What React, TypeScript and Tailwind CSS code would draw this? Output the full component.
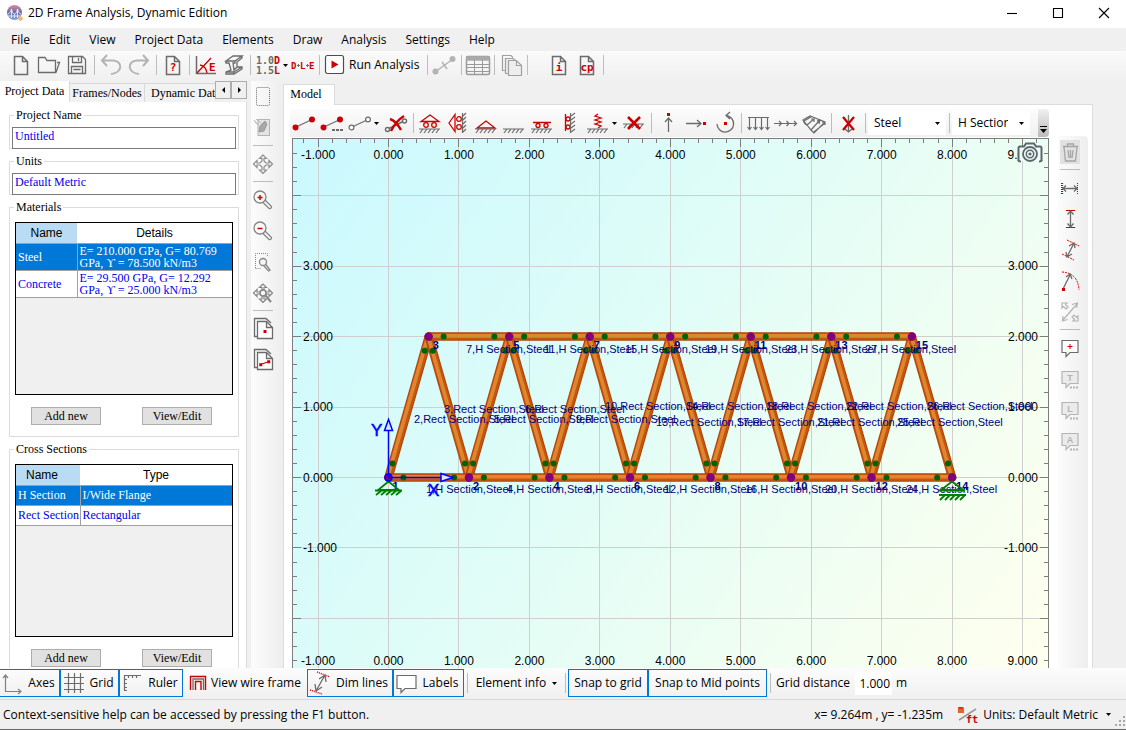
import { ReactNode } from "react";
import clsx from "clsx";

const RED = "#cc0000";
const GRAY = "#6b6b6b";
const LIGHT = "#b4b4b4";

type IconProps = { w?: number; h?: number; color?: string; children: ReactNode };

const Icon = ({ w = 24, h = 24, color = GRAY, children }: IconProps) => (
  <svg width={w} height={h} viewBox={`0 0 ${w} ${h}`} fill="none" stroke={color} strokeWidth="1.5" className="shrink-0" aria-hidden="true">
    {children}
  </svg>
);

const Caret = () => (
  <svg width="5" height="3" viewBox="0 0 5 3" className="shrink-0" aria-hidden="true">
    <path d="M0 0H5L2.5 3Z" fill="#000" />
  </svg>
);

/* ---------- main toolbar icons ---------- */

const PageShape = () => <path d="M5.5 3.5H13.500L18.500 8.500V21.500H5.500ZM13.500 3.500V8.500H18.500" />;

const NewIcon = () => <Icon><PageShape /></Icon>;

const OpenIcon = () => (
  <Icon>
    <path strokeWidth="1.300" d="M1.500 4.500H8L10 7.500H18.500V19.500H1.500ZM19 19.500L22.500 9.500H20" />
  </Icon>
);

const SaveIcon = () => (
  <Icon>
    <path strokeWidth="1.300" d="M3.500 3.500H17.500L20.500 6.500V20.500H3.500ZM7.500 3.500V9.500H16.500V3.500M13.500 5V8M6.500 20V13.500H17.500V20M8.500 16.500H15.500" />
  </Icon>
);

const UndoIcon = () => (
  <Icon color={LIGHT}>
    <path strokeWidth="2" d="M3 7.500H14C24.500 8 23.500 20 12 21M8 2L3 7.500L8 13" />
  </Icon>
);

const RedoIcon = () => (
  <Icon color={LIGHT}>
    <path strokeWidth="2" d="M21 7.500H10C-0.500 8 0.500 20 12 21M16 2L21 7.500L16 13" />
  </Icon>
);

const PageTextIcon = ({ label }: { label: string }) => (
  <Icon>
    <PageShape />
    <text x="12" y="18" textAnchor="middle" stroke="none" fill={RED} className="font-['DejaVu_Sans_Mono',monospace] text-[11px] font-bold">{label}</text>
  </Icon>
);

const AngleIcon = () => (
  <Icon>
    <path d="M2.500 3V20.500H22" />
    <path d="M3 20L17 5M6 12Q12 13 13 20" stroke={RED} strokeWidth="1.300" />
    <text x="15" y="18" stroke="none" fill={RED} className="font-['DejaVu_Sans_Mono',monospace] text-[11px] font-bold">E</text>
  </Icon>
);

const BeamIcon = () => (
  <Icon>
    <path strokeWidth="1.300" d="M4 8L11 3H20L13 8ZM4 8V10H7L9 17L4 19V21H12L20 16V14H15L12 17L11 10H13V8M20 3V5L15 9V14M4 19H12V21M12 19L20 14" />
  </Icon>
);

const ComboIcon = () => (
  <Icon w={26} h={22}>
    <g stroke="none" className="font-['DejaVu_Sans_Mono',monospace] text-[10px] font-bold">
      <text x="1" y="10" fill={GRAY}>1.0<tspan fill={RED}>D</tspan></text>
      <text x="1" y="20" fill={GRAY}>1.5<tspan fill={RED}>L</tspan></text>
    </g>
  </Icon>
);

const DleIcon = () => (
  <Icon w={26}>
    <g stroke="none" fill={RED} className="font-['DejaVu_Sans_Mono',monospace] text-[9px] font-bold">
      <text x="1" y="16">D</text>
      <text x="10" y="16">L</text>
      <text x="19" y="16">E</text>
    </g>
    <path d="M7 12.500H10M8.500 11V14M16 12.500H19M17.500 11V14" strokeWidth="1" />
  </Icon>
);

const RunIcon = () => (
  <Icon w={22} h={22} color="#4d4d4d">
    <rect x="1.500" y="1.500" width="18" height="18" rx="2" fill="#fff" strokeWidth="1.200" />
    <path d="M7.500 6.500V14.500L14.500 10.500Z" fill={RED} stroke="none" />
  </Icon>
);

const MemberGrayIcon = () => (
  <Icon color={LIGHT}>
    <path d="M3 19L21 6M10 9L15 16" />
    <circle cx="3.500" cy="18.500" r="2.300" fill={LIGHT} />
    <circle cx="20.500" cy="6" r="2.300" fill={LIGHT} />
  </Icon>
);

const TableIcon = () => (
  <Icon w={26} color="#9a9a9a">
    <rect x="1.500" y="3.500" width="23" height="18" rx="1.500" />
    <path d="M2 4H24V7H2Z" fill="#aaa" stroke="#aaa" />
    <path d="M1 11.500H25M1 14.500H25M1 18.500H25M9.500 7V21M17.500 7V21" strokeWidth="1" />
  </Icon>
);

const CopiesIcon = () => (
  <Icon color="#a0a0a0">
    <g strokeWidth="1.200">
      <path d="M6 17.500H3.500V2.500H12L14 4.500" />
      <path d="M9 20.500H6.500V5.500H14L17 8" fill="#eee" />
      <path d="M9.500 7.500H17.500L22.500 12.500V22.500H9.500ZM17.500 7.500V12.500H22.500" fill="#eee" />
    </g>
  </Icon>
);

/* ---------- left strip icons ---------- */

const SelectIcon = () => (
  <Icon><rect x="5.500" y="2.500" width="13" height="18" rx="1" strokeWidth="1" strokeDasharray="1 1" /></Icon>
);

const BrushIcon = () => (
  <Icon color={LIGHT}>
    <rect x="7" y="3.500" width="11.500" height="16" fill="#e4e4e4" strokeWidth="1" />
    <path d="M9 10L14 5L16 8L13 15L8 16Z" fill="#a8a8a8" stroke="#9a9a9a" strokeWidth="1" />
    <path d="M4 6L8 9M5 3L10 7M3 4L6 8" strokeWidth="1" />
  </Icon>
);

const ArrowsPath = () => (
  <path strokeWidth="1.200" d="M12 3L8.500 6.500H11V9L9 11H6V8.500L2.500 12L6 15.500V13H9L11 15V18H8.500L12 21.500L15.500 18H13V15L15 13H18V15.500L21.500 12L18 8.500V11H15L13 9V6.500H15.500Z" />
);

const PanIcon = () => <Icon color="#8d8d8d"><ArrowsPath /></Icon>;

const ZoomIcon = ({ minus }: { minus?: boolean }) => (
  <Icon color="#858585">
    <circle cx="9" cy="9" r="6" strokeWidth="1.300" />
    <path d="M14 12L20.500 18.500Q20.500 21 18 20.500L12 14.500" strokeWidth="1.300" />
    <path d={minus ? "M6.500 9.500H11.500" : "M6.500 9.500H11.500M9 7V12"} stroke={RED} />
  </Icon>
);

const ZoomAreaIcon = () => (
  <Icon color="#858585">
    <path d="M4.500 18V3.500H16.500V6M4.500 18.500H10" strokeWidth="1" strokeDasharray="1 1" />
    <circle cx="12" cy="12" r="3.500" strokeWidth="1.300" />
    <path d="M14.500 14L19 20L17.500 21L13 16" strokeWidth="1.300" />
  </Icon>
);

const ZoomExtentsIcon = () => (
  <Icon color="#858585">
    <ArrowsPath />
    <circle cx="12" cy="12" r="3" fill="#f6f6f6" />
    <path d="M14.500 14.500L20 21" strokeWidth="2" />
  </Icon>
);

const SheetsIcon = ({ member }: { member?: boolean }) => (
  <Icon>
    <path d="M6 19.500H3.500V1.500H15L20 6" strokeWidth="1.300" />
    <path d="M6.500 4.500H15.500L21.500 10.500V21.500H6.500ZM15.500 4.500V10.500H21.500" fill="#fff" strokeWidth="1.300" />
    {member ? (
      <g stroke={RED}>
        <path d="M9.500 16.500L18 13.500" strokeWidth="1.200" />
        <rect x="9" y="16" width="1.500" height="1.500" fill={RED} />
        <rect x="17" y="13" width="1.500" height="1.500" fill={RED} />
      </g>
    ) : (
      <rect x="12.500" y="13" width="3" height="3" fill={RED} stroke="none" />
    )}
  </Icon>
);

/* ---------- model toolbar icons ---------- */

const Ground = ({ y = 18 }: { y?: number }) => (
  <path strokeWidth="1.200" d={`M1 ${y}H22M2 ${y + 4}L5 ${y}M6 ${y + 4}L9 ${y}M10 ${y + 4}L13 ${y}M14 ${y + 4}L17 ${y}M18 ${y + 4}L21 ${y}`} />
);

const MemberIcon = ({ dots, hollow }: { dots?: boolean; hollow?: boolean }) => (
  <Icon>
    <path d="M4 16L19 9" strokeWidth="1.200" />
    <circle cx="3.500" cy="16.500" r="2.400" fill={hollow ? "#fff" : RED} stroke={hollow ? GRAY : RED} strokeWidth="1.200" />
    <circle cx="20" cy="8.500" r="2.400" fill={hollow ? "#fff" : RED} stroke={hollow ? GRAY : RED} strokeWidth="1.200" />
    {dots && <path d="M12 19H24" strokeWidth="2" strokeDasharray="3 1" />}
  </Icon>
);

const DeleteMemberIcon = () => (
  <Icon>
    <path d="M4 18L20 10" />
    <circle cx="3.500" cy="18.500" r="2" fill="#fff" />
    <circle cx="20.500" cy="10" r="2" fill="#fff" />
    <path d="M6 8Q12 10 17 19M20 5Q12 10 7 20" stroke={RED} strokeWidth="2.400" />
  </Icon>
);

const RollerPinIcon = () => (
  <Icon>
    <g stroke={RED} strokeWidth="1.300">
      <path d="M12 4L3 10.500H21Z" />
      <circle cx="8" cy="14" r="2.300" />
      <circle cx="16" cy="14" r="2.300" />
    </g>
    <Ground />
  </Icon>
);

const WallRollerPinIcon = () => (
  <Icon>
    <g stroke={RED} strokeWidth="1.300">
      <path d="M3 12L9 3.500V20.500Z" />
      <circle cx="13" cy="8" r="2.300" />
      <circle cx="13" cy="16" r="2.300" />
    </g>
    <path strokeWidth="1.200" d="M16.500 2V22M17 5L20 2M17 9L20 6M17 13L20 10M17 17L20 14M17 21L20 18" />
  </Icon>
);

const PinIcon = () => (
  <Icon><path d="M12 10L3 17H21Z" stroke={RED} strokeWidth="1.300" /><Ground /></Icon>
);

const FixedIcon = () => <Icon><Ground /></Icon>;

const SliderIcon = () => (
  <Icon>
    <g stroke={RED} strokeWidth="1.300">
      <path d="M3 11.500H21" />
      <circle cx="8" cy="14.500" r="2" />
      <circle cx="16" cy="14.500" r="2" />
    </g>
    <Ground />
  </Icon>
);

const WallSliderIcon = () => (
  <Icon>
    <g stroke={RED} strokeWidth="1.300">
      <path d="M7.500 3V20" />
      <circle cx="10" cy="8" r="2" />
      <circle cx="10" cy="16" r="2" />
    </g>
    <path strokeWidth="1.200" d="M12.500 2V22M13 5L17 2M13 9L17 6M13 13L17 10M13 17L17 14M13 21L17 18" />
  </Icon>
);

const SpringIcon = () => (
  <Icon>
    <path d="M12 3L9 5L15 7L9 9L15 11L9 13L15 15L12 17" stroke={RED} strokeWidth="1.300" />
    <Ground />
  </Icon>
);

const DeleteSupportIcon = () => (
  <Icon>
    <Ground y={13} />
    <path d="M6 6L18 18M18 6L6 18" stroke={RED} strokeWidth="2.600" />
  </Icon>
);

const ForceUpIcon = () => (
  <Icon>
    <path d="M12.500 21V7M9 11L12.500 7L16 11" strokeWidth="1.300" />
    <rect x="11" y="2" width="3" height="3" fill={RED} stroke="none" />
  </Icon>
);

const ForceRightIcon = () => (
  <Icon>
    <path d="M2 12.500H17M13 9L17 12.500L13 16" strokeWidth="1.300" />
    <rect x="19" y="11" width="3" height="3" fill={RED} stroke="none" />
  </Icon>
);

const MomentIcon = () => (
  <Icon>
    <path d="M5 13A8.300 8.300 0 1 0 14 4.500M18 1L14 4.500L18 8" strokeWidth="1.300" />
    <rect x="12" y="11" width="3" height="3" fill={RED} stroke="none" />
  </Icon>
);

const DistVertIcon = () => (
  <Icon>
    <path strokeWidth="1.200" d="M2 6.500H23M3.500 7V18M9.500 7V18M15.500 7V18M21.500 7V18M1.500 16L3.500 18.500L5.500 16M7.500 16L9.500 18.500L11.500 16M13.500 16L15.500 18.500L17.500 16M19.500 16L21.500 18.500L23.500 16" />
  </Icon>
);

const DistHorizIcon = () => (
  <Icon>
    <path strokeWidth="1.200" d="M0 12.500H23M5 10L7.500 12.500L5 15M12.500 10L15 12.500L12.500 15M20 10L22.500 12.500L20 15" />
  </Icon>
);

const SnowLoadIcon = () => (
  <Icon>
    <path strokeWidth="1.200" d="M1 9L8 5L23 11L12 22L9 19ZM1 9Q3 14 5 14L9 19M5 14L12 8M9 19L17 10M2 10L9 6M12 21L23 12M9 8H12V11M15 10L18 9L17 13M20 11H23V14" />
  </Icon>
);

const DeleteLoadIcon = () => (
  <Icon>
    <path d="M12.500 4V21M9 18L12.500 21L16 18" strokeWidth="1.300" />
    <path d="M7 6L18 19M18 6L7 19" stroke={RED} strokeWidth="2.300" />
  </Icon>
);

/* ---------- right strip icons ---------- */

const TrashIcon = () => (
  <Icon color="#a5a5a5">
    <path d="M5 6.500H20M9.500 6V4H15.500V6M6 7L7.500 21H17.500L19 7M10 10L11 18M12.500 10V18M15 10L14 18" strokeWidth="1.300" />
  </Icon>
);

const DimHorizIcon = () => (
  <Icon>
    <path d="M3.500 7V18M4.500 7V18M19.500 7V18" stroke={RED} strokeWidth="1" strokeDasharray="1 1" />
    <path d="M5 12.500H19M8 9.500L5 12.500L8 15.500M16 9.500L19 12.500L16 15.500" strokeWidth="1.300" />
  </Icon>
);

const DimVertIcon = () => (
  <Icon>
    <path d="M8 3.500H17M8 20.500H17" stroke={RED} strokeWidth="1" />
    <path d="M12.500 4V20M9.500 7.500L12.500 4L15.500 7.500M9.500 16.500L12.500 20L15.500 16.500" strokeWidth="1.300" />
  </Icon>
);

const DimAlignedIcon = () => (
  <Icon>
    <path d="M9 2L21 8M4 16L16 22" stroke={RED} strokeWidth="1" strokeDasharray="2 1" />
    <path d="M16 5L9 19M11 8L16 5L17 10M8 14L9 19L14 16" strokeWidth="1.300" />
  </Icon>
);

const DimRadiusIcon = () => (
  <Icon>
    <path d="M4 3Q20 4 21 21" stroke={RED} strokeWidth="1" strokeDasharray="2 1" />
    <path d="M5 20L12 6M8 8L12 5L14 10" strokeWidth="1.300" />
    <rect x="4" y="19" width="3" height="3" fill={RED} stroke="none" />
  </Icon>
);

const DimSizeIcon = () => (
  <Icon color={LIGHT}>
    <path strokeWidth="1.200" d="M5 20L19 4M14 4.500L19.500 3L18.500 8M5 16L4.500 21L9.500 19.500M4 3H9L7.500 4.500L10 7L8 9L5.500 6.500L4 8ZM20 21H15L16.500 19.500L14 17L16 15L18.500 17.500L20 16Z" />
  </Icon>
);

const BubbleIcon = ({ letter, plus }: { letter?: string; plus?: boolean }) => (
  <Icon color={plus ? GRAY : LIGHT}>
    <path d="M4 4.500H20V16.500H12L8 20.500V16.500H4Z" fill={plus ? "#fff" : "#ebebeb"} strokeWidth="1.200" />
    {plus && <path d="M12 8V13M9.500 10.500H14.500" stroke={RED} strokeWidth="1" />}
    {letter && (
      <>
        <text x="12" y="14" textAnchor="middle" stroke="none" fill={LIGHT} className="font-['Liberation_Sans',sans-serif] text-[9px] font-bold">{letter}</text>
        <path d="M12 20.500H21" strokeWidth="2" strokeDasharray="2 1" />
      </>
    )}
  </Icon>
);

/* ---------- bottom toolbar icons ---------- */

const AxesIcon = () => (
  <Icon color="#808080">
    <path strokeWidth="1.200" d="M5.500 4V20.500H21M3 7L5.500 4L8 7M18 18L21 20.500L18 23" />
  </Icon>
);
const GridIcon = () => (
  <Icon>
    <path strokeWidth="1.200" d="M2 6.500H22M2 12.500H22M2 18.500H22M6.500 2V22M12.500 2V22M18.500 2V22" />
  </Icon>
);
const RulerIcon = () => (
  <Icon>
    <path strokeWidth="1.200" d="M4.500 20V4.500H21M5 8.500H7M5 12.500H7M5 16.500H7M8.500 5V7M12.500 5V7M16.500 5V7M5 19.500H7" />
  </Icon>
);
const WireFrameIcon = () => (
  <Icon w={18} h={18}>
    <path d="M1.500 16V2.500H16.500V16M6.500 16V7.500H12V16" stroke={RED} strokeWidth="1.400" />
    <path d="M4 16V5H14.500V16" strokeWidth="1.300" />
  </Icon>
);
const DimLinesIcon = () => (
  <Icon>
    <path d="M9 1L22 6M2 19L14 23" stroke={RED} strokeDasharray="1 1" />
    <path strokeWidth="1.300" d="M17 4L8 20M11 8L17 4L18 11M7 13L8 20L14 16" />
  </Icon>
);
const LabelsIcon = () => (
  <Icon><path d="M2 4.500H21V17.500H10L6 21.500V17.500H2Z" fill="#fff" strokeWidth="1.200" /></Icon>
);

/* ---------- shared controls ---------- */

const Sep = ({ wide }: { wide?: boolean }) => (
  <span className={clsx("flex h-7 shrink-0 items-center justify-center", wide ? "w-1.5" : "w-[5px]")}>
    <span className="h-5 w-px bg-[#bdbdbd]" />
  </span>
);

const HSep = () => (
  <span className="flex h-[5px] w-6 shrink-0 items-center justify-center">
    <span className="h-px w-5 bg-[#bdbdbd]" />
  </span>
);

type ToolProps = { title: string; children: ReactNode; split?: boolean; active?: boolean };

const Tool = ({ title, children, split }: ToolProps) => (
  <button
    type="button"
    aria-label={title}
    className={clsx("flex h-7 shrink-0 items-center", split ? "w-9 gap-0.5 pl-0.5" : "w-7 justify-center")}
  >
    {children}
    {split && <Caret />}
  </button>
);

const VTool = ({ title, children, active }: ToolProps) => (
  <button type="button" aria-label={title} className="flex h-[31px] w-6 shrink-0 items-center justify-center">
    <span className={clsx("flex w-5 justify-center", active && "bg-[#e1e1e1]")}>{children}</span>
  </button>
);

const Toggle = ({ on, children, className }: { on?: boolean; children: ReactNode; className: string }) => (
  <button
    type="button"
    aria-pressed={on}
    className={clsx("flex h-7 shrink-0 items-center justify-center gap-1 border whitespace-nowrap", on ? "border-[#0078d7]" : "border-transparent", className)}
  >
    {children}
  </button>
);

/* ---------- side panel ---------- */

const Group = ({ title, children }: { title: string; children: ReactNode }) => (
  <fieldset className="border border-[#dcdcdc]">
    <legend className="ml-1 px-0.5 leading-[14px]">{title}</legend>
    {children}
  </fieldset>
);

const PanelInput = ({ label, value }: { label: string; value: string }) => (
  <input
    aria-label={label}
    defaultValue={value}
    className="mx-0.5 mt-[5px] -mb-px block h-[22px] w-[calc(100%-4px)] border border-[#7a7a7a] px-0.5 pb-1 text-[#0000f0]"
  />
);

type DataTableProps = { columns: [string, string]; rows: [string, string][]; narrow?: boolean };

const DataTable = ({ columns, rows, narrow }: DataTableProps) => (
  <div className="mx-[5px] mt-2 h-[173px] border border-black bg-[#f0f0f0]">
    <table className="w-full table-fixed border-collapse bg-white">
      <thead>
        <tr className="h-5 font-['Liberation_Sans',sans-serif]">
          <th className={clsx("bg-[#b9dcf4] font-normal", narrow ? "w-[64px] pr-3" : "w-[61px]")}>{columns[0]}</th>
          <th className="font-normal">{columns[1]}</th>
        </tr>
      </thead>
      <tbody>
        {rows.map((row, i) => (
          <tr key={row[0]} className={clsx(narrow ? "h-5" : "h-[27px]", i === 0 ? "bg-[#0078d7] text-white" : "text-[#0000f0]")}>
            <td className="overflow-hidden border border-l-0 border-[#a0a0a0] px-0.5 whitespace-nowrap">{row[0]}</td>
            <td className="border border-r-0 border-[#a0a0a0] px-0.5">{row[1]}</td>
          </tr>
        ))}
      </tbody>
    </table>
  </div>
);

const GroupButtons = () => (
  <div className="mt-3 mb-[11px] flex justify-between pr-[26px] pl-[21px]">
    {["Add new", "View/Edit"].map((label) => (
      <button key={label} type="button" className="h-[18px] w-[70px] border border-[#adadad] bg-[#e1e1e1] leading-4">
        {label}
      </button>
    ))}
  </div>
);

const SidePanel = () => (
  <aside className="flex w-[247px] shrink-0 flex-col overflow-hidden font-['Liberation_Serif',serif] text-[12px] leading-3">
    <div role="tablist" className="flex h-[21px] shrink-0 items-end">
      <button type="button" role="tab" aria-selected="true" className="h-[21px] w-[70px] shrink-0 border-r border-[#d9d9d9] bg-white pb-0.5">Project Data</button>
      <button type="button" role="tab" aria-selected="false" className="h-[19px] w-[75px] shrink-0 border-t border-r border-[#d9d9d9] bg-[#f2f2f2]">Frames/Nodes</button>
      <button type="button" role="tab" aria-selected="false" className="h-[19px] min-w-0 flex-1 overflow-hidden border-t border-[#d9d9d9] bg-[#f2f2f2] pl-1.5 text-left whitespace-nowrap">Dynamic Data</button>
      {["M5 0V6L2 3Z", "M2 0V6L5 3Z"].map((d, i) => (
        <button key={d} type="button" aria-label={i ? "Next tab" : "Previous tab"} className="flex h-[18px] w-4 shrink-0 items-center justify-center self-start border border-[#adadad] bg-[#f0f0f0]">
          <svg width="7" height="6" viewBox="0 0 7 6"><path d={d} /></svg>
        </button>
      ))}
    </div>
    <div className="flex min-h-0 flex-1 flex-col gap-[5px] overflow-hidden border-r border-[#dcdcdc] bg-white pt-1.5 pr-[7px] pl-[9px]">
      <Group title="Project Name">
        <PanelInput label="Project Name" value="Untitled" />
      </Group>
      <Group title="Units">
        <PanelInput label="Units" value="Default Metric" />
      </Group>
      <Group title="Materials">
        <DataTable
          columns={["Name", "Details"]}
          rows={[
            ["Steel", "E= 210.000 GPa, G= 80.769 GPa, ϒ = 78.500 kN/m3"],
            ["Concrete", "E= 29.500 GPa, G= 12.292 GPa, ϒ = 25.000 kN/m3"],
          ]}
        />
        <GroupButtons />
      </Group>
      <Group title="Cross Sections">
        <DataTable
          narrow
          columns={["Name", "Type"]}
          rows={[
            ["H Section", "I/Wide Flange"],
            ["Rect Section", "Rectangular"],
          ]}
        />
        <GroupButtons />
      </Group>
    </div>
  </aside>
);

/* ---------- model canvas ---------- */

const UNIT = 70.45;
const X0 = 96.5;
const Y0 = 339.5;
const W = 757;
const H = 530;

const px = (x: number) => X0 + x * UNIT;
const py = (y: number) => Y0 - y * UNIT;

const bottomNodes = Array.from({ length: 8 }, (_, i) => ({ x: px((i * 8) / 7), y: py(0), id: i === 0 ? 1 : i * 2 }));
const topNodes = Array.from({ length: 7 }, (_, i) => ({ x: px(((i + 0.5) * 8) / 7), y: py(2), id: i * 2 + 3 }));

type Point = { x: number; y: number };
const chords: [Point, Point][] = [
  ...bottomNodes.slice(1).map((n, i): [Point, Point] => [bottomNodes[i], n]),
  ...topNodes.slice(1).map((n, i): [Point, Point] => [topNodes[i], n]),
];
const diagonals: [Point, Point][] = topNodes.flatMap((n, i): [Point, Point][] => [
  [bottomNodes[i], n],
  [bottomNodes[i + 1], n],
]);

const memberLabels: [number, string, number, number][] = [
  [1, "H", 134, 355], [4, "H", 215, 355], [8, "H", 294, 355], [12, "H", 372, 355], [16, "H", 453, 355], [20, "H", 533, 355], [24, "H", 614, 355],
  [7, "H", 174, 215], [11, "H", 252, 215], [15, "H", 333, 215], [19, "H", 413, 215], [23, "H", 493, 215], [27, "H", 573, 215],
  [2, "Rect", 122, 285], [5, "Rect", 202, 285], [9, "Rect", 284, 285],
  [3, "Rect", 152, 275], [6, "Rect", 233, 275],
  [10, "Rect", 313, 272], [14, "Rect", 394, 272], [18, "Rect", 474, 272], [22, "Rect", 554, 272], [26, "Rect", 635, 272],
  [13, "Rect", 364, 288], [17, "Rect", 445, 288], [21, "Rect", 525, 288], [25, "Rect", 605, 288],
];

const Member = ({ from, to }: { from: Point; to: Point }) => {
  const line = { x1: from.x, y1: from.y, x2: to.x, y2: to.y };
  return (
    <g strokeLinecap="round">
      <line {...line} stroke="#a8470c" strokeWidth="8.500" />
      <line {...line} stroke="#c8540e" strokeWidth="6.500" />
      <line {...line} stroke="#e8822c" strokeWidth="3.600" transform="translate(-0.700 -0.700)" />
      <line {...line} stroke="#a8a040" strokeWidth="0.700" strokeDasharray="3 2" />
    </g>
  );
};

const ReleaseDots = ({ from, to, t }: { from: Point; to: Point; t: number }) => (
  <>
    {[t, 1 - t].map((k) => (
      <circle key={k} cx={from.x + (to.x - from.x) * k} cy={from.y + (to.y - from.y) * k} r="3" fill="#006400" />
    ))}
  </>
);

const ticks = (origin: number, max: number) => {
  const step = UNIT / 5;
  const list: { pos: number; major: boolean }[] = [];
  for (let i = -40; i < 60; i++) {
    const pos = origin + i * step;
    if (pos > 2 && pos < max - 1) list.push({ pos, major: i % 5 === 0 });
  }
  return list;
};

const ModelCanvas = () => (
  <svg
    viewBox={`0 0 ${W} ${H}`}
    preserveAspectRatio="xMinYMin slice"
    className="h-full w-full font-['Liberation_Sans',sans-serif] text-[12px]"
    role="img"
    aria-label="Truss model"
  >
    <defs>
      <linearGradient id="sky" x1="0" y1="0" x2={W} y2={H} gradientUnits="userSpaceOnUse">
        <stop offset="0" stopColor="#caf9ff" />
        <stop offset="0.500" stopColor="#e3fdf6" />
        <stop offset="1" stopColor="#ffffee" />
      </linearGradient>
    </defs>
    <rect width={W} height={H} fill="url(#sky)" />

    <g stroke="#cfcfcf" shapeRendering="crispEdges">
      {[-1, 0, 1, 2, 3, 4, 5, 6, 7, 8, 9].map((x) => <line key={x} x1={px(x)} x2={px(x)} y1="0" y2={H} />)}
      {[-2, -1, 0, 1, 2, 3, 4].map((y) => <line key={y} x1="0" x2={W} y1={py(y)} y2={py(y)} />)}
    </g>

    <g stroke="#7d7d7d" shapeRendering="crispEdges">
      <path d={`M0.500 ${H}V0.500H${W - 0.5}V${H}`} fill="none" />
      {ticks(X0, W).map(({ pos, major }) => <line key={pos} x1={pos} x2={pos} y1="0" y2={major ? 9 : 5} />)}
      {ticks(Y0, H).map(({ pos, major }) => (
        <g key={pos}>
          <line x1="0" x2={major ? 9 : 5} y1={pos} y2={pos} />
          <line x1={W} x2={W - (major ? 9 : 5)} y1={pos} y2={pos} />
        </g>
      ))}
    </g>

    <g textAnchor="middle" fill="#000">
      {[-1, 0, 1, 2, 3, 4, 5, 6, 7, 8, 9].map((x) => (
        <g key={x}>
          <text x={px(x)} y="21">{x.toFixed(3)}</text>
          <text x={px(x)} y="527">{x.toFixed(3)}</text>
        </g>
      ))}
    </g>
    <g fill="#000" textAnchor="end">
      {[-1, 0, 1, 2, 3].map((y) => (
        <g key={y}>
          <text x={y < 0 ? 45 : 41} y={py(y) + 4}>{y.toFixed(3)}</text>
          <text x="746" y={py(y) + 4}>{y.toFixed(3)}</text>
        </g>
      ))}
    </g>

    {diagonals.map(([a, b], i) => <Member key={i} from={a} to={b} />)}
    {chords.map(([a, b], i) => <Member key={i} from={a} to={b} />)}
    {chords.map(([a, b], i) => <ReleaseDots key={i} from={a} to={b} t={0.185} />)}
    {diagonals.map(([a, b], i) => <ReleaseDots key={i} from={a} to={b} t={0.1} />)}
    {[...bottomNodes, ...topNodes].map((n) => <circle key={n.id} cx={n.x} cy={n.y} r="4.200" fill="#800080" />)}

    <g fill="#000080" className="text-[11px]">
      {memberLabels.map(([id, section, x, y]) => (
        <text key={id} x={x} y={y}>{`${id},${section} Section,Steel`}</text>
      ))}
    </g>
    <g fill="#000080" className="text-[11px] font-bold">
      {[...bottomNodes, ...topNodes].map((n) => (
        <text key={n.id} x={n.x + 4} y={n.y + 12}>{n.id}</text>
      ))}
    </g>

    {/* supports */}
    <g stroke="#008000" strokeWidth="1.800" fill="none">
      <path d="M96.500 343.500L86 352H107ZM83 352.500H110M84 357L89 353M89 357L94 353M94 357L99 353M99 357L104 353M104 357L109 353" />
      <path d="M660 343.500L649 352H671ZM647 352.500H673M647 357H674M648 362L653 357M653 362L658 357M658 362L663 357M663 362L668 357M668 362L673 357" />
    </g>

    {/* axes */}
    <g stroke="#0000ff" strokeWidth="1.500" fill="none">
      <circle cx={X0} cy={Y0} r="3.500" fill="#800080" />
      <path d="M96.500 339.500H161M96.500 339.500V283" />
      <path d="M149 335.500L161 339.500L149 343.500ZM92.500 292.500L96.500 281.500L100.500 292.500Z" fill="#d8e8ff" />
    </g>
    <g fill="#0000ff" stroke="#0000ff" strokeWidth="0.500" className="text-[17px]">
      <text x="79" y="298">Y</text>
      <text x="136" y="358">X</text>
    </g>
  </svg>
);

const Combo = ({ label, value }: { label: string; value: string }) => (
  <label className="relative flex h-6 w-[78px] shrink-0 items-center bg-white">
    <select aria-label={label} defaultValue={value} className="h-full w-full appearance-none overflow-hidden pr-[22px] pl-1.5 text-clip">
      <option>{value}</option>
    </select>
    <span className="pointer-events-none absolute right-1.5"><Caret /></span>
  </label>
);

const ModelToolbar = () => (
  <div className="mr-[43px] mb-px ml-1.5 flex h-7 shrink-0 items-center overflow-hidden rounded-r bg-gradient-to-b from-[#fcfcfc] to-[#f0f0f0]">
    <Tool title="Draw member"><MemberIcon /></Tool>
    <Tool title="Draw members"><MemberIcon dots /></Tool>
    <Tool title="End releases" split><MemberIcon hollow /></Tool>
    <Tool title="Delete member"><DeleteMemberIcon /></Tool>
    <Sep wide />
    <Tool title="Pinned roller"><RollerPinIcon /></Tool>
    <Tool title="Vertical pinned roller"><WallRollerPinIcon /></Tool>
    <Tool title="Pinned support"><PinIcon /></Tool>
    <Tool title="Fixed support"><FixedIcon /></Tool>
    <Tool title="Fixed roller"><SliderIcon /></Tool>
    <Tool title="Vertical fixed roller"><WallSliderIcon /></Tool>
    <Tool title="Spring support" split><SpringIcon /></Tool>
    <Tool title="Delete support"><DeleteSupportIcon /></Tool>
    <Sep wide />
    <Tool title="Vertical force"><ForceUpIcon /></Tool>
    <Tool title="Horizontal force"><ForceRightIcon /></Tool>
    <Tool title="Moment"><MomentIcon /></Tool>
    <Sep wide />
    <Tool title="Distributed load"><DistVertIcon /></Tool>
    <Tool title="Axial load"><DistHorizIcon /></Tool>
    <Tool title="Inclined load"><SnowLoadIcon /></Tool>
    <Sep wide />
    <Tool title="Delete load"><DeleteLoadIcon /></Tool>
    <Sep wide />
    <Combo label="Material" value="Steel" />
    <Sep wide />
    <Combo label="Section" value="H Section" />
    <button type="button" aria-label="More tools" className="ml-auto flex h-full w-[11px] items-end justify-center bg-gradient-to-b from-[#f0f0f0] to-[#bbb] pb-1">
      <svg width="7" height="7" viewBox="0 0 7 7"><path d="M0 0H7V1H0ZM0 3H7L3.500 7Z" /></svg>
    </button>
  </div>
);

const ModelArea = () => (
  <main className="flex min-w-0 flex-1 flex-col bg-[#f0f0f0] pt-[3px]">
    <div role="tablist" className="flex h-[21px] shrink-0">
      <button type="button" role="tab" aria-selected="true" className="w-[52px] border-t border-r border-l border-[#dcdcdc] bg-white pr-1.5 pb-0.5 font-['Liberation_Serif',serif] text-[12px]">Model</button>
      <span className="mr-[33px] flex-1 border-b border-[#dcdcdc]" />
    </div>
    <div className="mr-[33px] flex min-h-0 flex-1 flex-col border-r border-l border-[#dcdcdc] bg-white pt-1">
      <ModelToolbar />
      <div className="flex min-h-0 flex-1">
        <div className="relative ml-2 min-w-0 flex-1 overflow-hidden">
          <ModelCanvas />
          <button type="button" aria-label="Screenshot" className="absolute top-1 right-1.5">
            <svg width="26" height="22" viewBox="0 0 26 22" fill="none" stroke="#5f6468" strokeWidth="2">
              <path d="M1.500 19V6Q1.500 4.500 3 4.500H7L9 1.500H17L19 4.500H23Q24.500 4.500 24.500 6V19" fill="#eafdfa" />
              <path d="M1.500 18Q1.500 19.500 4 19.500M24.500 18Q24.500 19.500 22 19.500" />
              <circle cx="13" cy="12" r="7" fill="#eafdfa" strokeWidth="1.800" />
              <circle cx="13" cy="12" r="3.700" strokeWidth="1.500" />
              <circle cx="13" cy="12" r="0.800" strokeWidth="1.500" />
            </svg>
          </button>
        </div>
        <div className="-mt-0.5 mr-1 ml-[9px] flex w-[30px] shrink-0 flex-col items-start overflow-hidden rounded-tr bg-gradient-to-r from-[#fcfcfc] to-[#eeeeee]">
          <VTool title="Delete" active><TrashIcon /></VTool>
          <HSep />
          <VTool title="Horizontal dimension"><DimHorizIcon /></VTool>
          <VTool title="Vertical dimension"><DimVertIcon /></VTool>
          <VTool title="Aligned dimension"><DimAlignedIcon /></VTool>
          <VTool title="Radius dimension"><DimRadiusIcon /></VTool>
          <VTool title="Resize dimension"><DimSizeIcon /></VTool>
          <HSep />
          <VTool title="Add label"><BubbleIcon plus /></VTool>
          <VTool title="Label text"><BubbleIcon letter="T" /></VTool>
          <VTool title="Label line"><BubbleIcon letter="L" /></VTool>
          <VTool title="Label font"><BubbleIcon letter="A" /></VTool>
        </div>
      </div>
    </div>
  </main>
);

/* ---------- window ---------- */

const TitleBar = () => (
  <header className="flex h-7 shrink-0 items-center bg-white pb-0.5 pl-[7px]">
    <svg width="16" height="16" viewBox="0 0 16 16" aria-hidden="true">
      <defs>
        <linearGradient id="logo" x1="0" y1="0" x2="0" y2="1">
          <stop offset="0" stopColor="#d98a9c" />
          <stop offset="0.500" stopColor="#6b6aa8" />
          <stop offset="1" stopColor="#7fa6d8" />
        </linearGradient>
      </defs>
      <circle cx="7.500" cy="7.500" r="7.500" fill="url(#logo)" />
      <path d="M1 9Q4 8 4.500 4Q5 9 7.500 9Q10 9 10.500 4Q11 8 14 9M4.500 4V13M10.500 4V13M1 11H14M7.500 9V13" stroke="#e8ecff" strokeWidth="0.900" fill="none" />
      <circle cx="13.500" cy="13.500" r="2.300" fill="#f7b56b" />
    </svg>
    <h1 className="ml-[5px] flex-1 truncate">2D Frame Analysis, Dynamic Edition</h1>
    {[
      ["Minimize", "M1 6.500H11"],
      ["Maximize", "M1.500 1.500H10.500V10.500H1.500Z"],
      ["Close", "M1 1L11 11M11 1L1 11"],
    ].map(([name, d]) => (
      <button key={name} type="button" aria-label={name} className="flex h-6 w-[46px] items-center justify-center pl-0.5">
        <svg width="12" height="12" viewBox="0 0 12 12" fill="none" stroke="#000" strokeWidth="1.100"><path d={d} /></svg>
      </button>
    ))}
  </header>
);

const menu = ["File", "Edit", "View", "Project Data", "Elements", "Draw", "Analysis", "Settings", "Help"];

const MainToolbar = () => (
  <div className="flex h-[30px] shrink-0 items-start overflow-hidden bg-gradient-to-b from-[#fafafa] to-[#f0f0f0] pl-[7px]">
    <Tool title="New"><NewIcon /></Tool>
    <Tool title="Open"><OpenIcon /></Tool>
    <Tool title="Save"><SaveIcon /></Tool>
    <Sep wide />
    <Tool title="Undo"><UndoIcon /></Tool>
    <Tool title="Redo"><RedoIcon /></Tool>
    <Sep wide />
    <Tool title="Project details"><PageTextIcon label="?" /></Tool>
    <Sep />
    <Tool title="Materials"><AngleIcon /></Tool>
    <Tool title="Sections"><BeamIcon /></Tool>
    <Sep />
    <Tool title="Load combinations" split><ComboIcon /></Tool>
    <Tool title="Load cases"><DleIcon /></Tool>
    <Sep />
    <button type="button" className="flex h-7 w-[103px] shrink-0 items-center gap-[3px] pl-0.5 whitespace-nowrap">
      <RunIcon />Run Analysis
    </button>
    <Sep />
    <Tool title="Member results"><MemberGrayIcon /></Tool>
    <Sep wide />
    <Tool title="Results table"><TableIcon /></Tool>
    <Sep />
    <Tool title="Copy"><CopiesIcon /></Tool>
    <Sep />
    <span className="w-[15px] shrink-0" />
    <Tool title="Information"><PageTextIcon label="i" /></Tool>
    <Tool title="Company"><PageTextIcon label="cp" /></Tool>
    <Sep />
  </div>
);

const LeftStrip = () => (
  <div className="ml-1 flex w-8 shrink-0 flex-col overflow-hidden bg-gradient-to-r from-[#fcfcfc] to-[#eeeeee]">
    <VTool title="Select"><SelectIcon /></VTool>
    <VTool title="Format painter"><BrushIcon /></VTool>
    <HSep />
    <VTool title="Pan"><PanIcon /></VTool>
    <HSep />
    <VTool title="Zoom in"><ZoomIcon /></VTool>
    <VTool title="Zoom out"><ZoomIcon minus /></VTool>
    <VTool title="Zoom window"><ZoomAreaIcon /></VTool>
    <VTool title="Zoom extents"><ZoomExtentsIcon /></VTool>
    <HSep />
    <VTool title="Copy nodes"><SheetsIcon /></VTool>
    <VTool title="Copy members"><SheetsIcon member /></VTool>
  </div>
);

const ViewToolbar = () => (
  <div className="flex h-8 shrink-0 items-start overflow-hidden border-b border-[#d7d7d7] bg-gradient-to-b from-[#fcfcfc] to-[#f0f0f0] pt-px">
    <Toggle on className="w-[60px] border-l-0 pr-1"><AxesIcon />Axes</Toggle>
    <Toggle on className="w-[59px] pr-1"><GridIcon />Grid</Toggle>
    <Toggle on className="w-16 pr-1"><RulerIcon />Ruler</Toggle>
    <Toggle className="w-[124px]"><WireFrameIcon />View wire frame</Toggle>
    <Toggle on className="w-[86px] pr-1"><DimLinesIcon />Dim lines</Toggle>
    <Toggle on className="w-[71px] pr-1"><LabelsIcon />Labels</Toggle>
    <Sep wide />
    <Toggle className="w-[93px]">Element info<span className="pl-0.5"><Caret /></span></Toggle>
    <Sep />
    <Toggle on className="w-[80px]">Snap to grid</Toggle>
    <Toggle on className="w-[119px]">Snap to Mid points</Toggle>
    <Sep wide />
    <label className="flex h-7 shrink-0 items-center gap-[5px] pl-[3px]">
      Grid distance
      <input defaultValue="1.000" className="h-[23px] w-[37px] bg-white pr-0.5 text-right" />
    </label>
    <span className="flex h-7 items-center pl-1">m</span>
  </div>
);

const StatusBar = () => (
  <footer className="flex h-[30px] shrink-0 items-center border-b border-[#696969] bg-[#f0f0f0] pl-[3px]">
    <span className="flex-1 truncate">Context-sensitive help can be accessed by pressing the F1 button.</span>
    <span className="whitespace-nowrap">x= 9.264m , y= -1.235m</span>
    <button type="button" className="ml-3.5 flex items-center gap-1 whitespace-nowrap">
      <Icon w={22} h={20}>
        <path d="M2 15L19 4" stroke="#999" />
        <g stroke="none" fill={RED} className="font-['DejaVu_Sans_Mono',monospace] text-[10px] font-bold">
          <text x="1" y="8">m</text>
          <text x="9" y="18">ft</text>
        </g>
      </Icon>
      Units: Default Metric
      <span className="pl-1"><Caret /></span>
    </button>
    <svg width="11" height="11" viewBox="0 0 11 11" fill="#a8a8a8" className="mt-auto mb-0.5 ml-1" aria-hidden="true">
      <path d="M8 0H10V2H8ZM4 4H6V6H4ZM8 4H10V6H8ZM0 8H2V10H0ZM4 8H6V10H4ZM8 8H10V10H8Z" />
    </svg>
  </footer>
);

const App = () => {
  return (
    <div className="flex h-screen flex-col overflow-hidden bg-[#f0f0f0] font-['Open_Sans',sans-serif] text-[12px] leading-4 text-black">
      <TitleBar />
      <nav className="flex h-[23px] shrink-0 items-center gap-[19px] pl-[11px]">
        {menu.map((item) => (
          <a key={item} href="#" className="whitespace-nowrap">{item}</a>
        ))}
      </nav>
      <MainToolbar />
      <div className="flex min-h-0 flex-1">
        <SidePanel />
        <LeftStrip />
        <ModelArea />
      </div>
      <ViewToolbar />
      <StatusBar />
    </div>
  );
};

export default App;
